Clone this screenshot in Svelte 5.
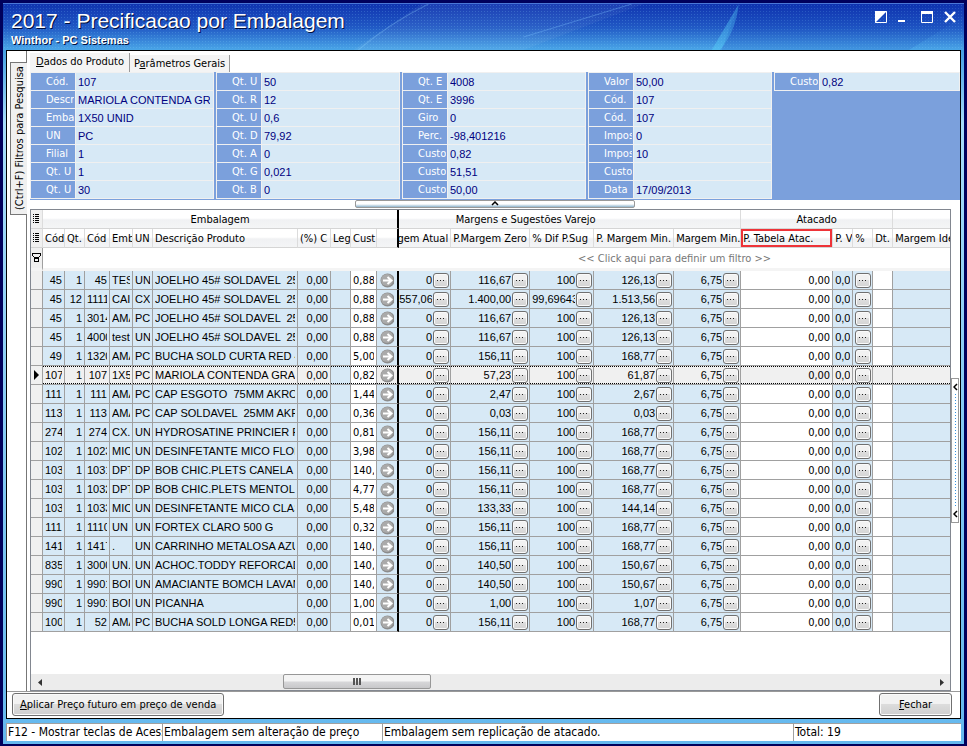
<script lang="ts">
  interface Column {
    label: string
    width?: number
    kind: 'text' | 'number' | 'price' | 'arrow' | 'lookup' | 'blank' | 'dots'
    className?: string
  }

  const columns: Column[] = [
    { label: 'Cód', width: 22, kind: 'number' },
    { label: 'Qt.', width: 20, kind: 'number' },
    { label: 'Cód', width: 25, kind: 'number' },
    { label: 'Emb', width: 23, kind: 'text' },
    { label: 'UN', width: 20, kind: 'text' },
    { label: 'Descrição Produto', width: 145, kind: 'text' },
    { label: '(%) C', width: 33, kind: 'number' },
    { label: 'Leg', width: 20, kind: 'blank', className: 'legend' },
    { label: 'Cust', width: 26, kind: 'price', className: 'cost' },
    { label: '', width: 22, kind: 'arrow', className: 'frozen' },
    { label: 'gem Atual', width: 52, kind: 'lookup', className: 'cut-left' },
    { label: 'P.Margem Zero', width: 79, kind: 'lookup' },
    { label: '% Dif P.Sug', width: 64, kind: 'lookup' },
    { label: 'P. Margem Min.', width: 80, kind: 'lookup' },
    { label: 'Margem Min.', width: 67, kind: 'lookup' },
    { label: 'P. Tabela Atac.', width: 92, kind: 'price', className: 'marked' },
    { label: 'P. V', width: 20, kind: 'number' },
    { label: '%', width: 20, kind: 'dots' },
    { label: 'Dt.', width: 20, kind: 'blank', className: 'white' },
    { label: 'Margem Ide', kind: 'blank' }
  ]

  const products = [
    ['45', '1', '45', 'TES', 'UN', 'JOELHO 45# SOLDAVEL  25', '0,88', '0', '116,67', '100', '126,13'],
    ['45', '12', '1111', 'CAIX', 'CX', 'JOELHO 45# SOLDAVEL  25', '0,88', '557,06', '1.400,00', '99,69643', '1.513,56'],
    ['45', '1', '3014', 'AMA', 'PC', 'JOELHO 45# SOLDAVEL  25', '0,88', '0', '116,67', '100', '126,13'],
    ['45', '1', '4000', 'test', 'UN', 'JOELHO 45# SOLDAVEL  25', '0,88', '0', '116,67', '100', '126,13'],
    ['49', '1', '1320', 'AMA', 'PC', 'BUCHA SOLD CURTA RED 4', '5,00', '0', '156,11', '100', '168,77'],
    ['107', '1', '107', '1X5', 'PC', 'MARIOLA CONTENDA GRAN', '0,82', '0', '57,23', '100', '61,87'],
    ['111', '1', '111', 'AMA', 'PC', 'CAP ESGOTO  75MM AKROS', '1,44', '0', '2,47', '100', '2,67'],
    ['113', '1', '113', 'AMA', 'PC', 'CAP SOLDAVEL  25MM AKR', '0,36', '0', '0,03', '100', '0,03'],
    ['274', '1', '274', 'CX.', 'UN', 'HYDROSATINE PRINCIER F', '0,81', '0', '156,11', '100', '168,77'],
    ['102', '1', '1023', 'MIC', 'UN', 'DESINFETANTE MICO FLOR', '3,98', '0', '156,11', '100', '168,77'],
    ['103', '1', '1031', 'DPT', 'DP', 'BOB CHIC.PLETS CANELA 1', '140,', '0', '156,11', '100', '168,77'],
    ['103', '1', '1032', 'DPT', 'DP', 'BOB CHIC.PLETS MENTOL 1', '4,77', '0', '156,11', '100', '168,77'],
    ['103', '1', '1033', 'MIC', 'UN', 'DESINFETANTE MICO CLAS', '5,48', '0', '133,33', '100', '144,14'],
    ['111', '1', '1110', 'UN', 'UN', 'FORTEX CLARO 500 G', '0,32', '0', '156,11', '100', '168,77'],
    ['141', '1', '1417', '.', 'UN', 'CARRINHO METALOSA AZUL', '140,', '0', '156,11', '100', '168,77'],
    ['835', '1', '3000', 'UN.', 'UN', 'ACHOC.TODDY REFORCAD', '140,', '0', '140,50', '100', '150,67'],
    ['990', '1', '9901', 'BOM', 'UN', 'AMACIANTE BOMCH LAVAN', '140,', '0', '140,50', '100', '150,67'],
    ['990', '1', '9901', 'BOM', 'UN', 'PICANHA', '1,00', '0', '1,00', '100', '1,07'],
    ['100', '1', '52', 'AMA', 'PC', 'BUCHA SOLD LONGA RED5', '0,01', '0', '156,11', '100', '168,77']
  ]

  const rows = products.map((p) => [
    ...p.slice(0, 6),
    '0,00',
    '',
    p[6],
    '',
    ...p.slice(7),
    '6,75',
    '0,00',
    '0,0',
    '',
    '',
    ''
  ])

  const details = [
    [
      ['Cód.', '107'],
      ['Descr', 'MARIOLA CONTENDA GRA'],
      ['Emba', '1X50 UNID'],
      ['UN', 'PC'],
      ['Filial', '1'],
      ['Qt. U', '1'],
      ['Qt. U', '30']
    ],
    [
      ['Qt. U', '50'],
      ['Qt. R', '12'],
      ['Qt. U', '0,6'],
      ['Qt. D', '79,92'],
      ['Qt. A', '0'],
      ['Qt. G', '0,021'],
      ['Qt. B', '0']
    ],
    [
      ['Qt. E', '4008'],
      ['Qt. E', '3996'],
      ['Giro', '0'],
      ['Perc.', '-98,401216'],
      ['Custo', '0,82'],
      ['Custo', '51,51'],
      ['Custo', '50,00']
    ],
    [
      ['Valor', '50,00'],
      ['Cód.', '107'],
      ['Cód.', '107'],
      ['Impos', '0'],
      ['Impos', '10'],
      ['Custo', ''],
      ['Data', '17/09/2013']
    ],
    [['Custo', '0,82']]
  ]

  let selectedRow = $state(5)
  let activeTab = $state('dados')
</script>

{#snippet listIcon()}
  <svg width="9" height="10" viewBox="0 0 9 10" shape-rendering="crispEdges">
    <path d="M1 .5h1M1 2.5h1M1 4.5h1M1 6.5h1M1 8.5h1" stroke="#000" />
    <path d="M3 .5h4M3 2.5h4M3 4.5h4M3 6.5h4M3 8.5h4" stroke="#000" />
  </svg>
{/snippet}

{#snippet moreButton()}
  <button type="button" class="more" aria-label="Detalhar">
    <svg width="8" height="1" viewBox="0 0 8 1" shape-rendering="crispEdges">
      <path d="M0 0h1v1H0zM3 0h1v1H3zM6 0h1v1H6z" fill="#222" />
    </svg>
  </button>
{/snippet}

<div class="window">
  <header class="titlebar">
    <svg class="streaks" viewBox="0 0 960 46" preserveAspectRatio="none" aria-hidden="true">
      <path d="M350 46L418 0H640L520 46Z" fill="#fff" opacity=".05" />
      <path d="M355 46Q385 20 425 0" stroke="#8fd4ff" opacity=".3" fill="none" />
      <path d="M520 33L628 0" stroke="#7fc4ff" opacity=".35" fill="none" />
      <path d="M708 46L735 0Q732 28 716 46Z" fill="#5fe0ff" opacity=".35" />
      <path d="M735 0H960V12L905 46H718Z" fill="#0a2cb0" opacity=".12" />
    </svg>
    <div class="titles">
      <h1>2017 - Precificacao por Embalagem</h1>
      <p>Winthor - PC Sistemas</p>
    </div>
    <div class="window-buttons">
      <button type="button" aria-label="Tema">
        <svg width="12" height="12" viewBox="0 0 12 12">
          <path d="M.5 .5h11v11H.5z" fill="none" stroke="#fff" />
          <path d="M0 0h12L0 12z" fill="#fff" />
        </svg>
      </button>
      <button type="button" aria-label="Minimizar">
        <svg width="12" height="12" viewBox="0 0 12 12"><path d="M0 9h7v2H0z" fill="#fff" /></svg>
      </button>
      <button type="button" aria-label="Maximizar">
        <svg width="12" height="12" viewBox="0 0 12 12">
          <path d="M.5 .5h11v11H.5z" fill="none" stroke="#fff" />
          <path d="M0 0h12v3H0z" fill="#fff" />
        </svg>
      </button>
      <button type="button" aria-label="Fechar janela">
        <svg width="12" height="12" viewBox="0 0 12 12">
          <path d="M1 1l10 10M11 1L1 11" stroke="#fff" stroke-width="2.4" />
        </svg>
      </button>
    </div>
  </header>

  <main class="client">
    <div class="workspace">
      <aside class="side">
        <button type="button" class="side-tab">(Ctrl+F) Filtros para Pesquisa</button>
      </aside>

      <div class="content">
        <div class="tabs" role="tablist">
          <button
            type="button"
            role="tab"
            class="tab"
            class:active={activeTab === 'dados'}
            aria-selected={activeTab === 'dados'}
            onclick={() => (activeTab = 'dados')}><u>D</u>ados do Produto</button
          >
          <button
            type="button"
            role="tab"
            class="tab"
            class:active={activeTab === 'gerais'}
            aria-selected={activeTab === 'gerais'}
            onclick={() => (activeTab = 'gerais')}>P<u>a</u>râmetros Gerais</button
          >
        </div>

        <section class="details">
          {#each details as group}
            <dl>
              {#each group as [label, value]}
                <div class="field">
                  <dt><span>{label}</span></dt>
                  <dd><span>{value}</span></dd>
                </div>
              {/each}
            </dl>
          {/each}
        </section>

        <div class="splitter">
          <button type="button" class="split-handle" aria-label="Recolher painel">
            <svg width="8" height="5" viewBox="0 0 8 5"><path d="M1 4l3-3 3 3" fill="none" stroke="#000" stroke-width="1.5" /></svg>
          </button>
        </div>

        <div class="grid-row">
          <div class="grid">
            <table>
              <colgroup>
                <col style="width: 12px" />
                {#each columns as column}
                  <col style={column.width ? `width: ${column.width}px` : undefined} />
                {/each}
              </colgroup>
              <thead>
                <tr class="groups">
                  <th class="indicator">{@render listIcon()}</th>
                  <th colspan="10" class="frozen">Embalagem</th>
                  <th colspan="5" class="scrolled">Margens e Sugestões Varejo</th>
                  <th colspan="4">Atacado</th>
                  <th></th>
                </tr>
                <tr class="labels">
                  <th class="indicator">{@render listIcon()}</th>
                  {#each columns as column}
                    <th class={column.className}><div class="clip"><span>{column.label}</span></div></th>
                  {/each}
                </tr>
                <tr class="filter">
                  <td class="indicator">
                    <svg width="9" height="10" viewBox="0 0 9 10" shape-rendering="crispEdges">
                      <path d="M.5 .5h8v2l-2 2h-4l-2-2zM2.5 5.5h4v3h-4z" fill="none" stroke="#000" />
                    </svg>
                  </td>
                  <td colspan="10"></td>
                  <td colspan="10" class="hint">&lt;&lt; Click aqui para definir um filtro &gt;&gt;</td>
                </tr>
              </thead>
              <tbody>
                {#each rows as row, rowIndex}
                  <tr class:selected={rowIndex === selectedRow} onclick={() => (selectedRow = rowIndex)}>
                    <td class="indicator">
                      {#if rowIndex === selectedRow}
                        <svg width="6" height="10" viewBox="0 0 6 10"><path d="M0 0l5 5-5 5z" /></svg>
                      {/if}
                    </td>
                    {#each columns as column, i}
                      <td class="{column.kind} {column.className ?? ''}">
                        {#if column.kind === 'arrow'}
                          <button type="button" class="go" aria-label="Abrir">
                            <svg width="14" height="15" viewBox="0 0 14 15">
                              <circle cx="7.5" cy="7.5" r="7" fill="#8c8c8c" />
                              <circle cx="7" cy="7" r="6" fill="#aaa" />
                              <path d="M3 7.5h8M7.5 4l4 3.5-4 3.5" fill="none" stroke="#fff" stroke-width="2" />
                            </svg>
                          </button>
                        {:else if column.kind === 'lookup'}
                          <div class="with-button">
                            <span>{row[i]}</span>
                            {@render moreButton()}
                          </div>
                        {:else if column.kind === 'dots'}
                          <div class="with-button">
                            {@render moreButton()}
                          </div>
                        {:else}
                          <div class="clip"><span>{row[i]}</span></div>
                        {/if}
                      </td>
                    {/each}
                  </tr>
                {/each}
              </tbody>
            </table>

            <div class="scrollbar">
              <button type="button" aria-label="Rolar para a esquerda">
                <svg width="4" height="7" viewBox="0 0 4 7"><path d="M4 0v7L0 3.5z" fill="#333" /></svg>
              </button>
              <div class="track"><div class="thumb"></div></div>
              <button type="button" aria-label="Rolar para a direita">
                <svg width="4" height="7" viewBox="0 0 4 7"><path d="M0 0v7l4-3.5z" fill="#333" /></svg>
              </button>
            </div>
          </div>

          <div class="edge">
            <button type="button" class="edge-handle" aria-label="Abrir painel lateral">
              <svg width="5" height="8" viewBox="0 0 5 8"><path d="M4 1L1 4l3 3" fill="none" stroke="#000" stroke-width="1.5" /></svg>
              <span class="dotted"></span>
              <svg width="5" height="8" viewBox="0 0 5 8"><path d="M4 1L1 4l3 3" fill="none" stroke="#000" stroke-width="1.5" /></svg>
            </button>
          </div>
        </div>
      </div>
    </div>

    <footer class="actions">
      <button type="button" class="command wide"><u>A</u>plicar Preço futuro em preço de venda</button>
      <button type="button" class="command"><u>F</u>echar</button>
    </footer>
  </main>

  <div class="statusbar">
    <span>F12 - Mostrar teclas de Acess</span>
    <span>Embalagem sem alteração de preço</span>
    <span>Embalagem sem replicação de atacado.</span>
    <span>Total: 19</span>
  </div>
</div>

<style>
  :global(body) {
    margin: 0;
  }

  .window,
  .window * {
    box-sizing: border-box;
  }

  .window {
    --ui: 'DejaVu Sans Condensed', 'DejaVu Sans', sans-serif;
    min-height: 100vh;
    display: flex;
    flex-direction: column;
    position: relative;
    padding: 0 3px 3px;
    border: solid #00005c;
    border-width: 3px 3px 2px;
    background: linear-gradient(#1038b4 0, #1f5fcb 25px, #45a0e4 48px, #a6dcfa 120px, #64b8ee 100%);
    font: 11px var(--ui);
    color: #000;
  }

  button {
    font: inherit;
    color: inherit;
    padding: 0;
    margin: 0;
    border: 0;
    background: none;
  }

  svg {
    display: block;
  }

  .titlebar {
    height: 47px;
    margin: 0 -3px;
    padding: 6px 8px 0;
    display: flex;
    justify-content: space-between;
    position: relative;
    border-top: 1px solid #4a78d8;
    background:
      radial-gradient(circle, rgba(140, 220, 255, 0.2) 1px, transparent 1px) 0 0 / 3px 3px,
      linear-gradient(#1034b0, #2058c4 50%, #4aa6e8);
    color: #fff;
  }

  .streaks {
    position: absolute;
    inset: 0;
    width: 100%;
    height: 100%;
  }

  .titles {
    position: relative;
    font-family: 'Liberation Sans', sans-serif;
    text-shadow: 1px 1px 0 #001040;
  }

  h1 {
    margin: 0;
    font-size: 21px;
    line-height: 22px;
    font-weight: 400;
  }

  .titles p {
    margin: 0;
    font-size: 11px;
    line-height: 16px;
    font-weight: 700;
  }

  .window-buttons {
    position: relative;
    display: flex;
    align-items: flex-start;
    gap: 11px;
    padding-top: 1px;
  }

  .client {
    flex: 1;
    display: flex;
    flex-direction: column;
    border: 1px solid #000;
    background: #fff;
  }

  .workspace {
    flex: 1;
    display: flex;
    border-bottom: 1px solid #999;
  }

  .side {
    width: 20px;
    padding: 11px 0 0 3px;
    background: linear-gradient(#777, #777) right / 1px 100% no-repeat;
  }

  .side-tab {
    width: 17px;
    height: 153px;
    border: 1px solid #777;
    border-left: 0;
    background: #f0f0f0;
    writing-mode: vertical-rl;
    transform: rotate(180deg);
    line-height: 15px;
    white-space: nowrap;
  }

  .content {
    flex: 1;
    min-width: 0;
    display: flex;
    flex-direction: column;
    padding-left: 3px;
  }

  .tabs {
    display: flex;
    align-items: flex-end;
    height: 21px;
  }

  .tab {
    height: 17px;
    padding: 0 4px;
    background: #f4f4f4;
    border-right: 1px solid #999;
    white-space: nowrap;
  }

  .tab.active {
    height: 19px;
    padding: 0 5px 2px 6px;
  }

  .details {
    display: grid;
    grid-template-columns: repeat(5, 1fr);
    background: #7ba0dc;
    border-bottom: 1px solid #7ba0dc;
    height: 128px;
  }

  dl {
    margin: 0;
    border-right: 2px solid #7ba0dc;
    min-width: 0;
  }

  dl:last-child {
    border-right: 0;
  }

  .field {
    display: flex;
    height: 18px;
    border: solid #f0f0f0;
    border-width: 0 1px 1px;
  }

  .field:first-child {
    border-top-width: 1px;
    height: 19px;
  }

  dt,
  dd {
    margin: 0;
    line-height: 18px;
    white-space: pre;
  }

  dt {
    width: 45px;
    padding: 0 1px 0 15px;
    color: #fff;
    border-right: 1px solid #f0f0f0;
  }

  dd {
    flex: 1;
    min-width: 0;
    padding: 0 3px 0 2px;
    background: #d7e9f6;
    color: #000080;
    font-family: 'Liberation Sans', sans-serif;
  }

  dt span,
  dd span {
    display: block;
    height: 17px;
    overflow: hidden;
  }

  .splitter {
    height: 9px;
    display: flex;
    justify-content: center;
  }

  .split-handle {
    width: 280px;
    height: 8px;
    border: 1px solid #999;
    border-radius: 2px;
    background: linear-gradient(#fff 3px, #8fb4cc);
    display: flex;
    justify-content: center;
  }

  .grid-row {
    flex: 1;
    display: flex;
  }

  .grid {
    flex: 1;
    min-width: 0;
    display: flex;
    flex-direction: column;
    border: 1px solid #828790;
  }

  table {
    table-layout: fixed;
    width: 100%;
    border-collapse: separate;
    border-spacing: 0;
  }

  th,
  td {
    height: 19px;
    padding: 0;
    line-height: 15px;
    overflow: hidden;
    white-space: pre;
  }

  th {
    font-weight: 400;
    border-right: 1px solid #dcdcdc;
    border-bottom: 1px solid #d5d5d5;
    background: linear-gradient(#fff 45%, #f0f1f3 55%, #f4f5f6);
  }

  .labels th {
    text-align: left;
  }

  .scrolled {
    padding-right: 88px;
  }

  .indicator {
    background: #f0f0f0;
  }

  .indicator svg {
    margin: 0 auto;
  }

  .clip {
    margin: 0 2px;
    overflow: hidden;
  }

  .labels .clip {
    margin-right: 0;
  }

  .labels .cut-left .clip {
    display: flex;
    justify-content: flex-end;
    margin: 0 2px 0 0;
  }

  .labels .marked {
    box-shadow: inset 0 0 0 2px #ee3338;
  }

  .filter td {
    height: 23px;
    border-bottom: 3px solid #f4f4f4;
  }

  .filter .indicator {
    border-right: 1px solid #a0a0a0;
  }

  .hint {
    text-align: center;
    color: #777;
  }

  tbody td {
    border-right: 1px solid #a0a0a0;
    border-bottom: 1px solid #a0a0a0;
    background: #d7e9f6;
    font-family: 'Liberation Sans', sans-serif;
  }

  th:last-child,
  tbody td:last-child {
    border-right: 0;
  }

  tbody td.indicator {
    background: #f0f0f0;
  }

  td.number,
  td.price,
  td.lookup {
    text-align: right;
  }

  td.price {
    font-family: var(--ui);
  }

  td.price,
  td.white {
    background: #fff;
  }

  tbody .selected td:not(.legend, .cost) {
    background: #f0f0f0;
  }

  tbody .selected td:not(.indicator) {
    background-image:
      repeating-linear-gradient(90deg, #000 0 1px, transparent 1px 2px),
      repeating-linear-gradient(90deg, #000 0 1px, transparent 1px 2px);
    background-size: 100% 1px;
    background-position:
      top,
      bottom;
    background-repeat: no-repeat;
  }

  th.frozen,
  tbody td.frozen {
    border-right: 2px solid #000;
  }

  .go {
    display: block;
    margin-left: 3px;
  }

  .with-button {
    display: flex;
    align-items: center;
    gap: 1px;
    padding: 0 1px 0 2px;
  }

  .with-button span {
    flex: 1;
    min-width: 0;
    overflow: hidden;
  }

  .cut-left .with-button {
    padding-left: 0;
  }

  .more {
    flex: none;
    width: 16px;
    height: 15px;
    display: grid;
    place-items: center;
    border: 1px solid #707070;
    border-radius: 3px;
    box-shadow: inset 0 0 0 1px #fafafa;
    background: linear-gradient(#f2f2f2 45%, #dedede 50%, #d4d4d4);
  }

  .scrollbar {
    height: 16px;
    margin-top: auto;
    display: flex;
    background: #ececec;
  }

  .scrollbar button {
    width: 17px;
    display: grid;
    place-items: center;
  }

  .track {
    flex: 1;
    padding-left: 235px;
  }

  .thumb {
    width: 148px;
    height: 15px;
    border: 1px solid #979797;
    border-radius: 2px;
    background:
      repeating-linear-gradient(90deg, #555 0 2px, transparent 2px 3px) center / 8px 7px no-repeat,
      linear-gradient(#f4f4f4 45%, #d6d6d8 55%, #c8c8ca);
  }

  .edge {
    width: 9px;
    padding-top: 169px;
  }

  .edge-handle {
    width: 8px;
    height: 145px;
    border: 1px solid #999;
    padding: 4px 0;
    background: #fff;
    display: flex;
    flex-direction: column;
    align-items: center;
    gap: 3px;
  }

  .dotted {
    flex: 1;
    width: 1px;
    background: repeating-linear-gradient(#3090e0 0 1px, transparent 1px 3px);
  }

  .actions {
    height: 26px;
    padding: 1px 8px 2px 5px;
    display: flex;
    justify-content: space-between;
  }

  .command {
    min-width: 73px;
    height: 23px;
    padding: 0 7px;
    border: 1px solid #707070;
    border-radius: 3px;
    box-shadow: inset 0 0 0 1px #fafafa;
    background: linear-gradient(#f2f2f2 45%, #dcdcdc 50%, #cfcfcf);
    white-space: nowrap;
  }

  .command.wide {
    min-width: 212px;
  }

  .statusbar {
    display: grid;
    grid-template-columns: 156px 220px 1fr 168px;
    margin-top: 4px;
    background: #fff;
    font-size: 12px;
    line-height: 17px;
  }

  .statusbar span {
    overflow: hidden;
    white-space: nowrap;
    padding-left: 1px;
    border-top: 1px solid #a0a0a0;
    border-left: 1px solid #a0a0a0;
  }
</style>
